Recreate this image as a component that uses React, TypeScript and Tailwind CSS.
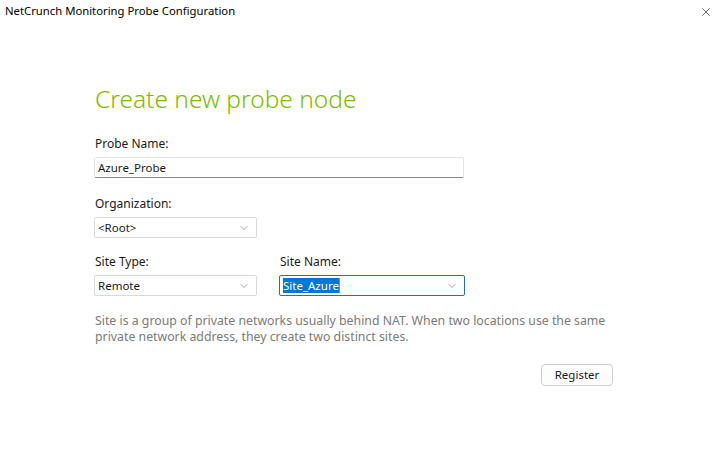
import { ChevronDown, X } from 'lucide-react'

const font = { fontFamily: '"Noto Sans", "Open Sans", sans-serif' }

function Label({ children }: { children: React.ReactNode }) {
  return <div className="text-[12px] leading-[14px] text-[#1a1a1a] mb-[6px]">{children}</div>
}

function Select({ value, width, focused }: { value: string; width: string; focused?: boolean }) {
  return (
    <div
      className={`${width} h-[21px] flex items-center justify-between pl-[3px] pr-[6px] bg-white rounded-[2px] border ${
        focused ? 'border-[#1f6fc5]' : 'border-[#d9d9d9]'
      }`}
    >
      {focused ? (
        <span className="flex items-center h-[15px]">
          <span className="bg-[#0078d7] text-white text-[11.5px] leading-[15px]">{value}</span>
          <span className="w-[1px] h-[15px] bg-[#f07a1a]" />
        </span>
      ) : (
        <span className="text-[11.5px] leading-[15px] text-[#1a1a1a]">{value}</span>
      )}
      <ChevronDown size={12} strokeWidth={1.2} className="text-[#606060]" />
    </div>
  )
}

export default function App() {
  return (
    <div className="w-[721px] h-[455px] bg-white relative overflow-hidden" style={font}>
      {/* Title bar */}
      <div className="h-[23px] flex items-center justify-between pl-[5px] pr-[8px]">
        <span className="text-[11.3px] text-black">NetCrunch Monitoring Probe Configuration</span>
        <X size={14} strokeWidth={1} className="text-black" />
      </div>

      <div className="pl-[94px] pt-[59px]">
        <h1 className="text-[24.5px] leading-[34px] font-light text-[#7cbb00] ml-[1px]">Create new probe node</h1>

        <div className="mt-[21px] ml-[1px]">
          <Label>Probe Name:</Label>
        </div>
        <div className="w-[370px] h-[21px] flex items-center pl-[3px] bg-white border border-[#e3e3e3] border-b-[#8a8a8a] rounded-[2px]">
          <span className="text-[11.5px] leading-[15px] text-[#1a1a1a]">Azure_Probe</span>
        </div>

        <div className="mt-[19px] ml-[1px]">
          <Label>Organization:</Label>
        </div>
        <Select value="<Root>" width="w-[163px]" />

        <div className="mt-[17px] flex gap-[22px]">
          <div>
            <div className="ml-[1px]">
              <Label>Site Type:</Label>
            </div>
            <Select value="Remote" width="w-[163px]" />
          </div>
          <div>
            <div className="ml-[1px]">
              <Label>Site Name:</Label>
            </div>
            <Select value="Site_Azure" width="w-[186px]" focused />
          </div>
        </div>

        <p className="mt-[17px] ml-[1px] w-[540px] text-[12.3px] leading-[16px] text-[#7a7a7a]">
          Site is a group of private networks usually behind NAT. When two locations use the same private network
          address, they create two distinct sites.
        </p>

        <div className="mt-[19px] w-[519px] flex justify-end">
          <button className="w-[72px] h-[22px] rounded-[4px] border border-[#cfcfcf] bg-[#fdfdfd] text-[11.5px] text-[#1a1a1a]">
            Register
          </button>
        </div>
      </div>
    </div>
  )
}
